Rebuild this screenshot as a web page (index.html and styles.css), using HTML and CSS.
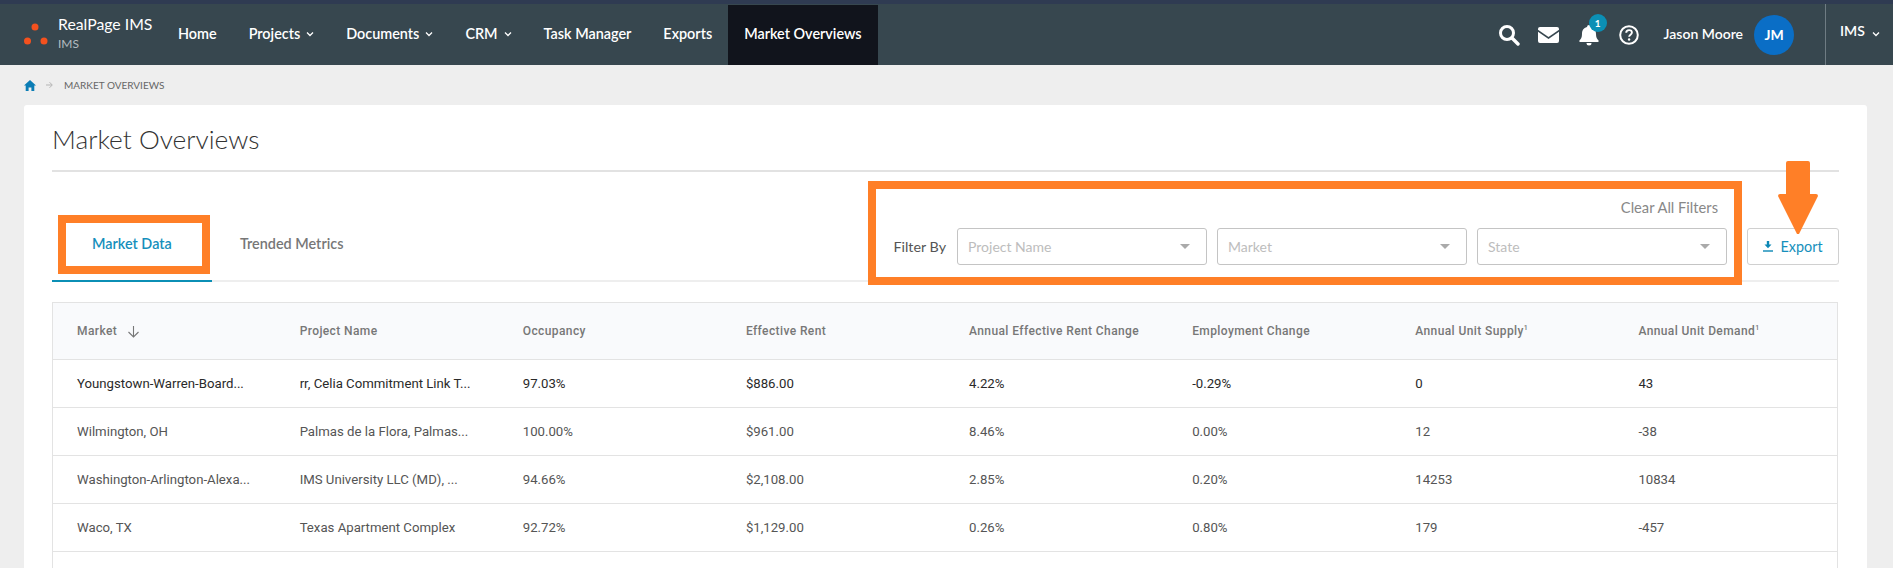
FILE: index.html
```html
<!DOCTYPE html>
<html lang="en">
<head>
    <meta charset="UTF-8">
    <meta name="viewport" content="width=device-width, initial-scale=1.0">
    <title>Market Overviews</title>
    <link rel="stylesheet" href="styles.css">
</head>
<body>

    <header class="navbar">
        <div class="brand">
            <svg class="brand-logo" width="24" height="24" viewBox="0 0 24 24">
                <circle cx="11" cy="5" r="3.5" fill="#f4511e"/>
                <circle cx="3.5" cy="19" r="3.5" fill="#f4511e"/>
                <circle cx="20" cy="19" r="3.5" fill="#f4511e"/>
            </svg>
            <div class="brand-text">
                <div class="brand-name">RealPage IMS</div>
                <div class="brand-sub">IMS</div>
            </div>
        </div>
        <nav class="nav-links">
            <a class="nav-link">Home</a>
            <a class="nav-link">Projects <svg class="chev" width="8" height="6" viewBox="0 0 8 6"><path d="M1 1.5l3 3 3-3" fill="none" stroke="#fff" stroke-width="1.3"/></svg></a>
            <a class="nav-link">Documents <svg class="chev" width="8" height="6" viewBox="0 0 8 6"><path d="M1 1.5l3 3 3-3" fill="none" stroke="#fff" stroke-width="1.3"/></svg></a>
            <a class="nav-link">CRM <svg class="chev" width="8" height="6" viewBox="0 0 8 6"><path d="M1 1.5l3 3 3-3" fill="none" stroke="#fff" stroke-width="1.3"/></svg></a>
            <a class="nav-link">Task Manager</a>
            <a class="nav-link">Exports</a>
            <a class="nav-link active">Market Overviews</a>
        </nav>
        <div class="nav-right">
            <svg class="icon-search" width="22" height="22" viewBox="0 0 22 22"><circle cx="9" cy="9" r="6.5" fill="none" stroke="#fff" stroke-width="3"/><path d="M14 14l6 6" stroke="#fff" stroke-width="3.4" stroke-linecap="round"/></svg>
            <svg class="icon-mail" width="21" height="16" viewBox="0 0 21 16"><path d="M2 0h17a2 2 0 0 1 2 2v.8l-10.500 7.200L0 2.800V2a2 2 0 0 1 2-2z" fill="#fff"/><path d="M0 4.800l10.500 7.200L21 4.800V14a2 2 0 0 1-2 2H2a2 2 0 0 1-2-2z" fill="#fff"/></svg>
            <div class="bell-wrap">
                <svg width="20" height="22" viewBox="0 0 20 22"><path d="M10 1a2 2 0 0 1 2 2c3.500.8 5 3.500 5 7 0 3.500 1 5 2.500 6.500.5.700.2 1.500-.7 1.500H1.200c-.9 0-1.200-.8-.7-1.500C2 15 3 13.500 3 10c0-3.500 1.500-6.200 5-7a2 2 0 0 1 2-2z" fill="#fff"/><path d="M7.500 19h5a2.500 2.500 0 0 1-5 0z" fill="#fff"/></svg>
                <span class="badge">1</span>
            </div>
            <svg class="icon-help" width="20" height="20" viewBox="0 0 20 20"><circle cx="10" cy="10" r="8.800" fill="none" stroke="#fff" stroke-width="2"/><path d="M7.200 7.800c0-1.700 1.300-2.700 2.900-2.700 1.600 0 2.800 1 2.800 2.400 0 2.200-2.800 2.200-2.800 4.300" fill="none" stroke="#fff" stroke-width="1.900"/><circle cx="10.100" cy="14.500" r="1.200" fill="#fff"/></svg>
            <span class="user-name">Jason Moore</span>
            <span class="avatar">JM</span>
            <div class="org">IMS <svg class="chev-org" width="8" height="6" viewBox="0 0 8 6"><path d="M1 1.500l3 3 3-3" fill="none" stroke="#fff" stroke-width="1.300"/></svg></div>
        </div>
    </header>

    <div class="breadcrumb">
        <svg width="12" height="11" viewBox="0 0 12 11"><path d="M6 0l6 5.500h-1.700V11H7.400V7.400H4.600V11H1.700V5.500H0z" fill="#0b7db5"/></svg>
        <svg class="crumb-arrow" width="7" height="8" viewBox="0 0 7 8"><path d="M0 4h6M3.500 1.200L6.300 4 3.500 6.800" fill="none" stroke="#b5b5b5"/></svg>
        <span>Market Overviews</span>
    </div>

    <main class="card">
        <h1 class="page-title">Market Overviews</h1>

        <div class="toolbar">
            <div class="tabs">
                <a class="tab active">Market Data</a>
                <a class="tab">Trended Metrics</a>
            </div>
            <div class="filters">
                <a class="clear-filters">Clear All Filters</a>
                <div class="filter-row">
                    <span class="filter-label">Filter By</span>
                    <div class="select"><span>Project Name</span><i class="caret"></i></div>
                    <div class="select"><span>Market</span><i class="caret"></i></div>
                    <div class="select"><span>State</span><i class="caret"></i></div>
                    <button class="export-btn" type="button">
                        <svg width="10" height="11" viewBox="0 0 10 11"><path d="M3.300 0h3.400v4H10L5 8 0 4h3.300z" fill="#0b87b5" transform="translate(1.500 0) scale(.7 .9)"/><path d="M0 10h10" stroke="#0b87b5" stroke-width="1.400"/></svg>
                        Export
                    </button>
                </div>
            </div>
        </div>

        <table class="data-table">
            <thead>
                <tr>
                    <th>Market <svg class="sort" width="13" height="13" viewBox="0 0 13 13"><path d="M6.500 1v11M1.500 7l5 5 5-5" fill="none" stroke="#777" stroke-width="1.100"/></svg></th>
                    <th>Project Name</th>
                    <th>Occupancy</th>
                    <th>Effective Rent</th>
                    <th>Annual Effective Rent Change</th>
                    <th>Employment Change</th>
                    <th>Annual Unit Supply<sup>1</sup></th>
                    <th>Annual Unit Demand<sup>1</sup></th>
                </tr>
            </thead>
            <tbody>
                <tr class="hovered">
                    <td>Youngstown-Warren-Board...</td>
                    <td>rr, Celia Commitment Link T...</td>
                    <td>97.03%</td>
                    <td>$886.00</td>
                    <td>4.22%</td>
                    <td>-0.29%</td>
                    <td>0</td>
                    <td>43</td>
                </tr>
                <tr>
                    <td>Wilmington, OH</td>
                    <td>Palmas de la Flora, Palmas...</td>
                    <td>100.00%</td>
                    <td>$961.00</td>
                    <td>8.46%</td>
                    <td>0.00%</td>
                    <td>12</td>
                    <td>-38</td>
                </tr>
                <tr>
                    <td>Washington-Arlington-Alexa...</td>
                    <td>IMS University LLC (MD), ...</td>
                    <td>94.66%</td>
                    <td>$2,108.00</td>
                    <td>2.85%</td>
                    <td>0.20%</td>
                    <td>14253</td>
                    <td>10834</td>
                </tr>
                <tr>
                    <td>Waco, TX</td>
                    <td>Texas Apartment Complex</td>
                    <td>92.72%</td>
                    <td>$1,129.00</td>
                    <td>0.26%</td>
                    <td>0.80%</td>
                    <td>179</td>
                    <td>-457</td>
                </tr>
                <tr>
                    <td>&nbsp;</td><td></td><td></td><td></td><td></td><td></td><td></td><td></td>
                </tr>
            </tbody>
        </table>

        <!-- annotations drawn over the screenshot -->
        <div class="mark mark-tab"></div>
        <div class="mark mark-filters"></div>
        <svg class="mark-arrow" width="40" height="73" viewBox="0 0 40 73"><path d="M8 2a2 2 0 0 1 2-2h20a2 2 0 0 1 2 2v31h6a2 2 0 0 1 2 2L21 73h-2L0 35a2 2 0 0 1 2-2h6z" fill="#ff7f27"/></svg>
    </main>

</body>
</html>
```

FILE: styles.css
```css
html, body {
    height: 100%;
}

body {
    margin: 0;
    background-color: #eeeeee;
    font-family: Lato, "Noto Sans", sans-serif;
    overflow: hidden;
}

.navbar {
    display: flex;
    align-items: stretch;
    height: 61px;
    background-color: #37474f;
    border-top: 4px solid #2f3b52;
    color: white;
}

.brand {
    display: flex;
    align-items: center;
    width: 162px;
    padding-left: 24px;
    box-sizing: border-box;
}

.brand-logo {
    margin-right: 10px;
    margin-top: -1px;
}

.brand-name {
    font-size: 15.800px;
    line-height: 20px;
    margin-top: -1px;
}

.brand-sub {
    font-size: 12px;
    line-height: 20px;
    color: #b4bcc0;
}

.nav-links {
    display: flex;
}

.nav-link {
    display: flex;
    align-items: center;
    padding: 0 16px 3px;
    font-size: 14.400px;
    font-weight: 600;
    margin-top: 1px;
}

.nav-link.active {
    background-color: #11141c;
}

.chev {
    margin-left: 6px;
}

.nav-right {
    display: flex;
    align-items: center;
    margin-left: auto;
}

.icon-mail {
    margin-left: 18px;
}

.bell-wrap {
    position: relative;
    display: flex;
    margin-left: 20px;
}

.badge {
    position: absolute;
    top: -10px;
    left: 10px;
    width: 18px;
    height: 18px;
    border-radius: 50%;
    background-color: #0b8fb5;
    font-size: 10px;
    font-weight: 700;
    line-height: 18px;
    text-align: center;
}

.icon-help {
    margin-left: 20px;
}

.user-name {
    margin-left: 25px;
    margin-bottom: 2px;
    font-size: 14px;
    font-weight: 600;
}

.avatar {
    width: 40px;
    height: 40px;
    margin-left: 11px;
    border-radius: 50%;
    background-color: #0a6ec6;
    font-size: 14px;
    font-weight: 700;
    line-height: 40px;
    text-align: center;
}

.org {
    display: flex;
    align-items: center;
    align-self: stretch;
    width: 68px;
    box-sizing: border-box;
    margin-left: 31px;
    padding: 0 0 9px 14px;
    border-left: 1px solid #6f7c83;
    font-size: 14px;
    font-weight: 600;
}

.org .chev-org {
    margin-left: 7px;
    margin-top: 8px;
}

.breadcrumb {
    display: flex;
    align-items: center;
    height: 40px;
    padding-left: 24px;
    font-size: 10px;
    color: #666;
    text-transform: uppercase;
}

.crumb-arrow {
    margin: 0 11px 0 10px;
}

.card {
    position: relative;
    margin: 0 26px 0 24px;
    height: 600px;
    padding: 0 28px;
    background-color: white;
    border-radius: 3px 3px 0 0;
}

.page-title {
    margin: 0;
    height: 65px;
    border-bottom: 2px solid #e2e2e2;
    box-sizing: content-box;
    font-size: 26.300px;
    font-weight: 300;
    line-height: 68px;
    color: #333;
}

.toolbar {
    display: flex;
    justify-content: space-between;
    align-items: flex-end;
    height: 108px;
    border-bottom: 2px solid #eeeeee;
}

.tabs {
    display: flex;
}

.tab {
    display: block;
    box-sizing: border-box;
    height: 60px;
    padding: 0 40px;
    font-size: 14.400px;
    font-weight: 600;
    line-height: 44px;
    color: #777;
    margin-bottom: -2px;
}

.tab.active {
    width: 160px;
    color: #168fbc;
    border-bottom: 2px solid #0b8fb5;
}

.tab + .tab {
    padding-left: 28px;
}

.filters {
    display: flex;
    flex-direction: column;
    align-items: flex-end;
}

.clear-filters {
    margin-right: 121px;
    margin-bottom: 12px;
    font-size: 14.700px;
    line-height: 18px;
    color: #888;
}

.filter-row {
    display: flex;
    align-items: center;
    padding-bottom: 15px;
}

.filter-label {
    margin-right: 11px;
    font-size: 14.300px;
    color: #555;
}

.select {
    display: flex;
    justify-content: space-between;
    align-items: center;
    box-sizing: border-box;
    width: 250px;
    height: 37px;
    margin-right: 10px;
    padding: 0 16px 0 10px;
    border: 1px solid #c4c4c4;
    border-radius: 3px;
    font-size: 14px;
    color: #bdbdbd;
}

.caret {
    width: 0;
    height: 0;
    border-left: 5px solid transparent;
    border-right: 5px solid transparent;
    border-top: 5px solid #aaa;
}

.export-btn {
    display: flex;
    align-items: center;
    justify-content: center;
    gap: 7px;
    box-sizing: border-box;
    width: 92px;
    height: 37px;
    margin-left: 10px;
    padding: 0;
    background-color: white;
    border: 1px solid #d0d0d0;
    border-radius: 3px;
    font-family: Lato, "Noto Sans", sans-serif;
    font-size: 14.400px;
    color: #168fbc;
}

.data-table {
    width: 1786px;
    margin-top: 20px;
    border-collapse: collapse;
    table-layout: fixed;
    font-family: Roboto, sans-serif;
    font-size: 13.200px;
    border: 1px solid #e3e3e3;
}

.data-table th {
    height: 57px;
    padding: 0 0 0 24px;
    box-sizing: border-box;
    background-color: #f9fafc;
    border-bottom: 1px solid #e3e3e3;
    color: #777;
    font-size: 12px;
    font-weight: 500;
    letter-spacing: 0.4px;
    text-align: left;
}

.data-table th sup {
    font-size: 7px;
    line-height: 0;
}

.sort {
    margin-left: 6px;
    vertical-align: -3px;
}

.data-table td {
    height: 48px;
    padding: 0 0 0 24px;
    box-sizing: border-box;
    border-bottom: 1px solid #e3e3e3;
    color: #555;
    white-space: nowrap;
}

.data-table .hovered td {
    color: #2a2a2a;
}

.mark {
    position: absolute;
    box-sizing: border-box;
    border: 8px solid #ff7f27;
}

.mark-tab {
    left: 34px;
    top: 110px;
    width: 152px;
    height: 59px;
}

.mark-filters {
    left: 844px;
    top: 76px;
    width: 874px;
    height: 104px;
}

.mark-arrow {
    position: absolute;
    left: 1754px;
    top: 56px;
}
```
